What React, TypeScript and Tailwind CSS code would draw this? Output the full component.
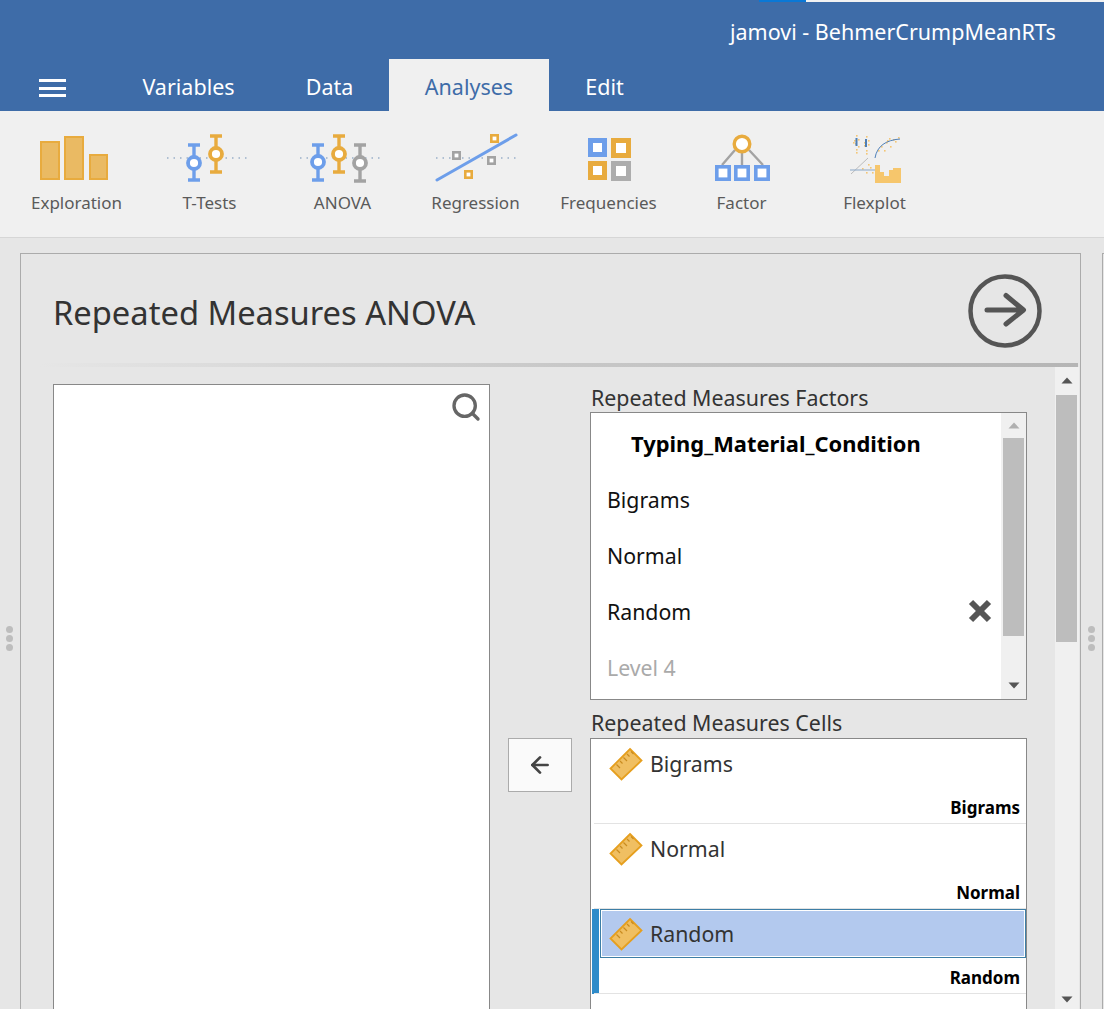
import React from "react";
import { ArrowLeft, Search, X } from "lucide-react";

const FONT = "font-['Open_Sans','Noto_Sans',sans-serif]";

function ErrorBar({ x, top, bottom, cy, color }: { x: number; top: number; bottom: number; cy: number; color: string }) {
  return (
    <g stroke={color} fill="none">
      <path d={`M${x} ${top}V${bottom}M${x - 6} ${top}H${x + 6}M${x - 6} ${bottom}H${x + 6}`} strokeWidth="3.4" />
      <circle cx={x} cy={cy} r="6" fill="#fff" strokeWidth="3.8" />
    </g>
  );
}

function Sq({ x, y, size, border, color }: { x: number; y: number; size: number; border: number; color: string }) {
  return <rect x={x + border / 2} y={y + border / 2} width={size - border} height={size - border} fill="#fff" stroke={color} strokeWidth={border} />;
}

const BLUE = "#6d9eea";
const ORANGE = "#e8ab3e";
const GRAY = "#a3a3a3";

function ExplorationIcon() {
  return (
    <g fill="#eaba63" stroke={ORANGE} strokeWidth="2">
      <rect x="41" y="142" width="18" height="37" />
      <rect x="65" y="137" width="18" height="42" />
      <rect x="90" y="155" width="17" height="24" />
    </g>
  );
}

function Dotted({ x1, x2 }: { x1: number; x2: number }) {
  return <path d={`M${x1} 158H${x2}`} stroke="#6f8fb5" strokeWidth="1" strokeDasharray="1.5 5" />;
}

function TTestIcon() {
  return (
    <g>
      <Dotted x1={167} x2={248} />
      <ErrorBar x={194} top={145} bottom={180} cy={163} color={BLUE} />
      <ErrorBar x={216} top={136} bottom={172} cy={154} color={ORANGE} />
    </g>
  );
}

function AnovaIcon() {
  return (
    <g>
      <Dotted x1={300} x2={381} />
      <ErrorBar x={318} top={145} bottom={180} cy={162} color={BLUE} />
      <ErrorBar x={339} top={136} bottom={172} cy={154} color={ORANGE} />
      <ErrorBar x={360} top={145} bottom={181} cy={163} color={GRAY} />
    </g>
  );
}

function RegressionIcon() {
  return (
    <g>
      <Dotted x1={436} x2={518} />
      <path d="M437 180L516 135" stroke={BLUE} strokeWidth="3" strokeLinecap="round" />
      <Sq x={452} y={151} size={9} border={2.6} color={GRAY} />
      <Sq x={487} y={156} size={9} border={2.6} color={GRAY} />
      <Sq x={490} y={134} size={9} border={2.6} color={ORANGE} />
      <Sq x={464} y={170} size={9} border={2.6} color={ORANGE} />
    </g>
  );
}

function FrequenciesIcon() {
  return (
    <g>
      <Sq x={588} y={138} size={19} border={5} color={BLUE} />
      <Sq x={611} y={138} size={20} border={5} color={ORANGE} />
      <Sq x={588} y={161} size={19} border={5} color={ORANGE} />
      <Sq x={611} y={161} size={20} border={5} color="#adadad" />
    </g>
  );
}

function FactorIcon() {
  return (
    <g>
      <path d="M735 150L722 165M742 152V165M749 150L763 165" stroke={GRAY} strokeWidth="2.4" fill="none" />
      <circle cx="742" cy="144" r="7.8" fill="#fff" stroke={ORANGE} strokeWidth="3.4" />
      <Sq x={715} y={165} size={16} border={3.6} color={BLUE} />
      <Sq x={734} y={165} size={16} border={3.6} color={BLUE} />
      <Sq x={754} y={165} size={16} border={3.6} color={BLUE} />
    </g>
  );
}

function FlexplotIcon() {
  const dots = [
    [856, 135], [856, 152], [855, 143], [858, 146], [854, 140], [858, 139], [853, 142], [856, 149],
    [866, 136], [866, 150], [868, 144], [864, 145], [868, 140], [864, 142], [866, 153],
    [878, 150], [881, 146], [886, 142], [889, 138], [893, 139], [898, 137], [884, 150], [890, 146], [895, 141], [887, 140],
    [870, 167], [866, 172], [862, 168], [876, 166], [872, 172], [868, 164],
  ];
  return (
    <g>
      {dots.map(([x, y], i) => (
        <rect key={i} x={x} y={y} width="1.6" height="1.6" fill="#f3c675" />
      ))}
      <path d="M856.500 138V146M866 139V147" stroke="#4f7fb5" strokeWidth="2" />
      <path d="M875 158C877 146 886 140 900 139" stroke="#4f80b8" strokeWidth="1" fill="none" />
      <path d="M851 174L868 158" stroke="#b5b5b5" strokeWidth="0.9" />
      <path d="M850 170H875" stroke="#8aa7c7" strokeWidth="1" />
      <path d="M875 165H880V172H884V176H889V170H893V168H901V183H875Z" fill="#f6c66c" />
    </g>
  );
}

const TOOLS = [
  { label: "Exploration", x: 10, Icon: ExplorationIcon },
  { label: "T-Tests", x: 143, Icon: TTestIcon },
  { label: "ANOVA", x: 276, Icon: AnovaIcon },
  { label: "Regression", x: 409, Icon: RegressionIcon },
  { label: "Frequencies", x: 542, Icon: FrequenciesIcon },
  { label: "Factor", x: 675, Icon: FactorIcon },
  { label: "Flexplot", x: 808, Icon: FlexplotIcon },
];

function Ruler({ x, y }: { x: number; y: number }) {
  return (
    <svg className="absolute" style={{ left: x, top: y }} width="34" height="34" viewBox="0 0 34 34">
      <path d="M21 2L32.500 13.500L12.500 32.500L1.500 21.500Z" fill="#f0bf62" stroke="#e69f1e" strokeWidth="1.800" />
      <path d="M18 7l2.500 2.500M14.500 10.500l3.500 3.500M11 14l2.500 2.500M7.500 17.500l3.500 3.500M22 4.500l2.500 2.500" stroke="#c98c20" strokeWidth="1.200" fill="none" />
    </svg>
  );
}

function DragDots({ x }: { x: number }) {
  return (
    <div className="absolute top-[626px] flex flex-col gap-[2px]" style={{ left: x }}>
      <div className="h-[7px] w-[7px] rounded-full bg-[#bdbdbd]" />
      <div className="h-[7px] w-[7px] rounded-full bg-[#bdbdbd]" />
      <div className="h-[7px] w-[7px] rounded-full bg-[#bdbdbd]" />
    </div>
  );
}

function Triangle({ up, color, x, y }: { up?: boolean; color: string; x: number; y: number }) {
  return (
    <svg className="absolute" style={{ left: x, top: y }} width="12" height="7" viewBox="0 0 12 7">
      <path d={up ? "M6 0.500L11.500 6.500H0.500Z" : "M0.500 0.500H11.500L6 6.500Z"} fill={color} />
    </svg>
  );
}

export default function App() {
  return (
    <div className={`relative h-[1009px] w-[1104px] overflow-hidden bg-[#e6e6e6] ${FONT}`}>
      {/* HEADER */}
      <div className="absolute left-0 top-0 h-[111px] w-full bg-[#3e6ca8]">
        <div className="absolute left-[759px] top-0 h-[2px] w-[47px] bg-[#0a78d6]" />
        <div className="absolute left-[806px] top-0 h-[2px] w-[298px] bg-[#f2f2f2]" />
        <div className="absolute left-[730px] top-[15px] whitespace-nowrap text-[21.500px] leading-[34px] text-white">
          jamovi - BehmerCrumpMeanRTs
        </div>
        <div className="absolute left-[39px] top-[79px] flex w-[27px] flex-col gap-[4.500px]">
          <div className="h-[3px] bg-white" />
          <div className="h-[3px] bg-white" />
          <div className="h-[3px] bg-white" />
        </div>
        <div className="absolute left-[107px] top-[59px] flex h-[52px] text-[21.500px] leading-[56px]">
          <div className="w-[163px] text-center text-white">Variables</div>
          <div className="w-[119px] text-center text-white">Data</div>
          <div className="w-[160px] bg-[#f0f0f0] text-center text-[#3e6ca8]">Analyses</div>
          <div className="w-[111px] text-center text-white">Edit</div>
        </div>
      </div>

      {/* RIBBON */}
      <div className="absolute left-0 top-[111px] flex h-[127px] w-full border-b border-[#d6d6d6] bg-[#f0f0f0] pl-[10px]">
        {TOOLS.map(({ label, x, Icon }) => (
          <div key={label} className="relative w-[133px]">
            <svg className="absolute left-0 top-[19px]" width="133" height="56" viewBox={`${x} 130 133 56`}>
              <Icon />
            </svg>
            <div className="absolute left-0 top-[79px] w-full text-center text-[17px] leading-[26px] text-[#5a5a5a]">{label}</div>
          </div>
        ))}
      </div>

      <DragDots x={6} />
      <DragDots x={1088} />

      {/* PANEL */}
      <div className="absolute left-[20px] top-[253px] h-[800px] w-[1061px] border border-[#ababab] bg-[#e6e6e6]" />
      <div className="absolute left-[1102px] top-[253px] h-[800px] w-[10px] border border-[#ababab]" />

      <div className="absolute left-[53px] top-[290px] whitespace-nowrap text-[32.700px] leading-[46px] text-[#333333]">
        Repeated Measures ANOVA
      </div>
      <svg className="absolute left-[967px] top-[273px]" width="76" height="76" viewBox="0 0 76 76">
        <circle cx="38" cy="38" r="34.500" fill="none" stroke="#555555" strokeWidth="4.500" />
        <path d="M20 37H56M39 22.500L56.500 37L39 51" fill="none" stroke="#555555" strokeWidth="5" strokeLinecap="round" strokeLinejoin="round" />
      </svg>
      <div className="absolute left-[40px] top-[363px] h-[4px] w-[1038px] bg-gradient-to-r from-[#e6e6e6] via-[#c8c8c8] to-[#b5b5b5]" />

      {/* PANEL SCROLLBAR */}
      <div className="absolute left-[1055px] top-[367px] h-[642px] w-[24px] bg-[#f0f0f0]">
        <Triangle up color="#555555" x={6} y={10} />
        <div className="absolute left-[1px] top-[28px] h-[247px] w-[21px] bg-[#bdbdbd]" />
        <Triangle color="#555555" x={6} y={629} />
      </div>

      {/* VARIABLE LIST */}
      <div className="absolute left-[53px] top-[384px] h-[700px] w-[437px] border border-[#888888] bg-white">
        <Search className="absolute left-[396px] top-[6px] text-[#666666]" size={32} strokeWidth={2.500} />
      </div>

      {/* FACTORS */}
      <div className="absolute left-[591px] top-[384px] whitespace-nowrap text-[21.400px] leading-[28px] text-[#333333]">Repeated Measures Factors</div>
      <div className="absolute left-[590px] top-[412px] h-[288px] w-[437px] border border-[#888888] bg-white text-[21.300px] leading-[28px] text-[#111111]">
        <div className="absolute left-[40px] top-[17px] whitespace-nowrap text-[21.900px] font-bold text-black">Typing_Material_Condition</div>
        <div className="absolute left-[16px] top-[73px]">Bigrams</div>
        <div className="absolute left-[16px] top-[129px]">Normal</div>
        <div className="absolute left-[16px] top-[185px]">Random</div>
        <div className="absolute left-[16px] top-[241px] text-[#aaaaaa]">Level 4</div>
        <X className="absolute left-[371px] top-[180px] text-[#555555]" size={36} strokeWidth={4} strokeLinecap="butt" />
        <div className="absolute left-[410px] top-0 h-[286px] w-[25px] bg-[#f0f0f0]">
          <Triangle up color="#b0b0b0" x={7} y={9} />
          <div className="absolute left-[2px] top-[25px] h-[198px] w-[21px] bg-[#bdbdbd]" />
          <Triangle color="#555555" x={7} y={269} />
        </div>
      </div>

      {/* MOVE BUTTON */}
      <div className="absolute left-[508px] top-[738px] flex h-[54px] w-[64px] items-center justify-center border border-[#ababab] bg-[#fafafa]">
        <ArrowLeft size={26} strokeWidth={2.500} className="text-[#444444]" />
      </div>

      {/* CELLS */}
      <div className="absolute left-[591px] top-[709px] whitespace-nowrap text-[21.400px] leading-[28px] text-[#333333]">Repeated Measures Cells</div>
      <div className="absolute left-[590px] top-[738px] h-[400px] w-[437px] border border-[#888888] bg-white text-[#333333]">
        <div className="absolute left-[1px] top-[170px] h-[85px] w-[7px] bg-[#2e8bc9]" />
        <div className="absolute left-[9px] top-[170px] h-[49px] w-[426px] border border-[#3d7ea6] bg-[#b3c9ee] shadow-[inset_0_0_0_1px_#ffffff]" />

        <Ruler x={18} y={8} />
        <div className="absolute left-[59px] top-[11px] text-[21.300px] leading-[28px]">Bigrams</div>
        <div className="absolute right-[6px] top-[58px] text-[17px] font-bold leading-[22px] text-black">Bigrams</div>
        <div className="absolute left-[3px] top-[84px] h-px w-[432px] bg-[#e3e3e3]" />

        <Ruler x={18} y={93} />
        <div className="absolute left-[59px] top-[96px] text-[21.300px] leading-[28px]">Normal</div>
        <div className="absolute right-[6px] top-[143px] text-[17px] font-bold leading-[22px] text-black">Normal</div>
        <div className="absolute left-[3px] top-[169px] h-px w-[432px] bg-[#e3e3e3]" />

        <Ruler x={18} y={178} />
        <div className="absolute left-[59px] top-[181px] text-[21.300px] leading-[28px]">Random</div>
        <div className="absolute right-[6px] top-[228px] text-[17px] font-bold leading-[22px] text-black">Random</div>
        <div className="absolute left-[3px] top-[254px] h-px w-[432px] bg-[#e3e3e3]" />
      </div>
    </div>
  );
}
